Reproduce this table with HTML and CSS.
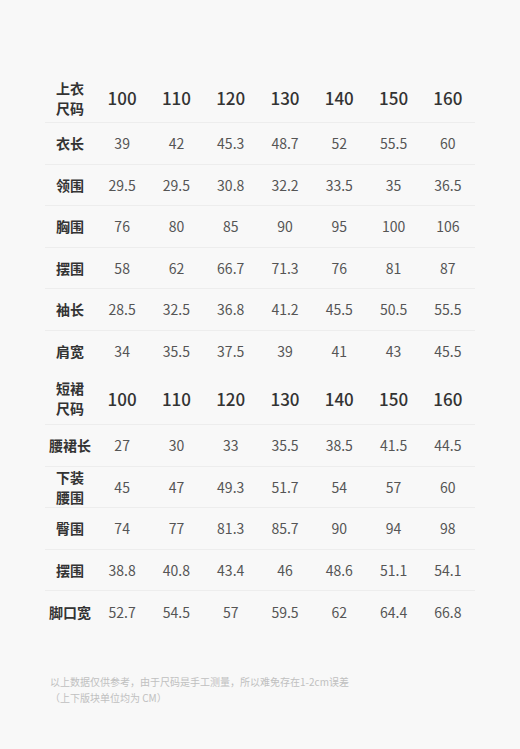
FILE: index.html
```html
<!DOCTYPE html>
<html lang="zh">
<head>
<meta charset="utf-8">
<link rel="stylesheet" href="styles.css">
</head>
<body>
<div class="page">
  <div class="table">
    <div class="row head"><div class="label">上衣<br>尺码</div><div>100</div><div>110</div><div>120</div><div>130</div><div>140</div><div>150</div><div>160</div></div>
    <div class="row"><div class="label">衣长</div><div>39</div><div>42</div><div>45.3</div><div>48.7</div><div>52</div><div>55.5</div><div>60</div></div>
    <div class="row"><div class="label">领围</div><div>29.5</div><div>29.5</div><div>30.8</div><div>32.2</div><div>33.5</div><div>35</div><div>36.5</div></div>
    <div class="row"><div class="label">胸围</div><div>76</div><div>80</div><div>85</div><div>90</div><div>95</div><div>100</div><div>106</div></div>
    <div class="row"><div class="label">摆围</div><div>58</div><div>62</div><div>66.7</div><div>71.3</div><div>76</div><div>81</div><div>87</div></div>
    <div class="row"><div class="label">袖长</div><div>28.5</div><div>32.5</div><div>36.8</div><div>41.2</div><div>45.5</div><div>50.5</div><div>55.5</div></div>
    <div class="row last"><div class="label">肩宽</div><div>34</div><div>35.5</div><div>37.5</div><div>39</div><div>41</div><div>43</div><div>45.5</div></div>
    <div class="row head head2"><div class="label">短裙<br>尺码</div><div>100</div><div>110</div><div>120</div><div>130</div><div>140</div><div>150</div><div>160</div></div>
    <div class="row"><div class="label">腰裙长</div><div>27</div><div>30</div><div>33</div><div>35.5</div><div>38.5</div><div>41.5</div><div>44.5</div></div>
    <div class="row"><div class="label">下装<br>腰围</div><div>45</div><div>47</div><div>49.3</div><div>51.7</div><div>54</div><div>57</div><div>60</div></div>
    <div class="row"><div class="label">臀围</div><div>74</div><div>77</div><div>81.3</div><div>85.7</div><div>90</div><div>94</div><div>98</div></div>
    <div class="row"><div class="label">摆围</div><div>38.8</div><div>40.8</div><div>43.4</div><div>46</div><div>48.6</div><div>51.1</div><div>54.1</div></div>
    <div class="row last"><div class="label">脚口宽</div><div>52.7</div><div>54.5</div><div>57</div><div>59.5</div><div>62</div><div>64.4</div><div>66.8</div></div>
  </div>
  <p class="note">以上数据仅供参考，由于尺码是手工测量，所以难免存在1-2cm误差<br>（上下版块单位均为 CM）</p>
</div>
</body>
</html>
```
FILE: styles.css
```css
html, body {
  margin: 0;
  padding: 0;
  background: #f8f8f8;
}
body {
  font-family: "Noto Sans CJK SC", "Noto Sans", sans-serif;
  width: 520px;
  height: 749px;
  overflow: hidden;
}
.page {
  padding: 73px 45px 0 45px;
}
.table {
  width: 430px;
}
.row {
  display: grid;
  grid-template-columns: 50px repeat(7, 1fr);
  align-items: center;
  height: 41.5px;
  border-bottom: 1px solid #ededed;
  box-sizing: border-box;
  font-size: 14px;
  color: #555;
  text-align: center;
}
.row.last {
  border-bottom: none;
}
.row .label {
  font-weight: 700;
  color: #333;
  line-height: 20px;
  text-align: center;
}
.row.head {
  height: 50px;
  font-size: 17px;
  font-weight: 500;
  color: #333;
}
.row.head .label {
  font-size: 14px;
  font-weight: 700;
}
.row.head2 {
  height: 53px;
}
.note {
  margin: 41px 0 0 5px;
  font-size: 10px;
  line-height: 16px;
  color: #c0c0c0;
}
```
